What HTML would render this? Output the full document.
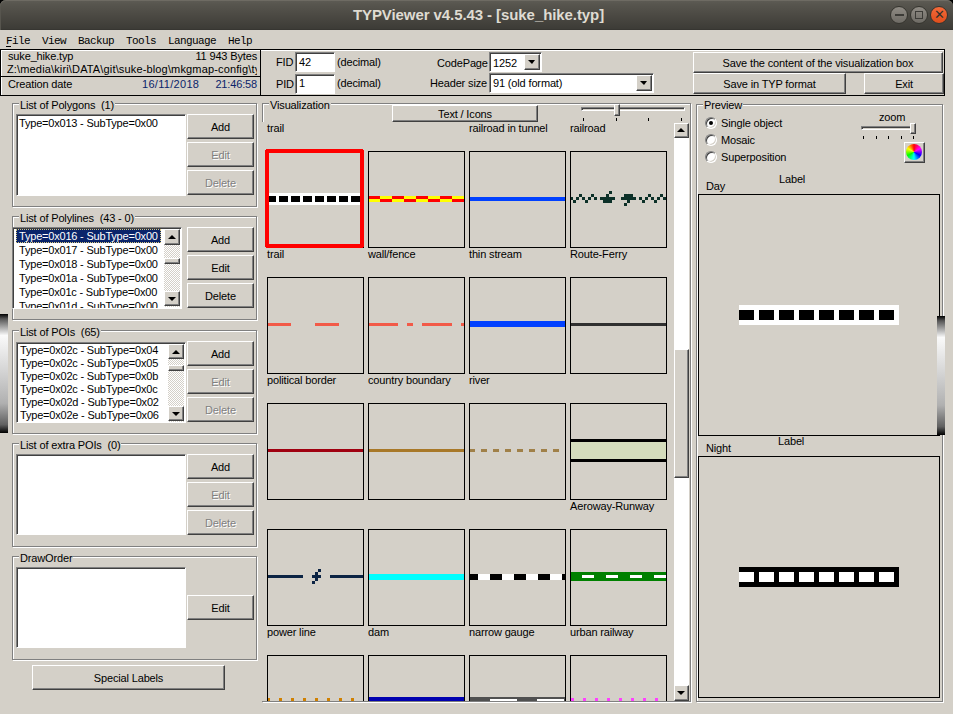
<!DOCTYPE html>
<html><head><meta charset="utf-8">
<style>
*{box-sizing:border-box;margin:0;padding:0}
html,body{width:953px;height:714px;overflow:hidden;background:#d4d0c8;font-family:"Liberation Sans",sans-serif;font-size:11px;color:#000;letter-spacing:-0.15px}
.a{position:absolute}
.t{position:absolute;white-space:nowrap;line-height:12px}
/* title */
#title{left:0;top:0;width:953px;height:30px;background:linear-gradient(#5e5c55,#57554e 15%,#4a4842 55%,#3d3c37 95%,#34332f);border-radius:6px 6px 0 0;box-shadow:inset 0 1px 0 #6e6b63,inset 1px 0 0 #57554e}
#tbg{left:0;top:0;width:953px;height:10px;background:#000}
/* raised button */
.btn{position:absolute;background:#d4d0c8;border-top:1px solid #fff;border-left:1px solid #fff;border-right:1px solid #404040;border-bottom:1px solid #404040;box-shadow:inset -1px -1px 0 #808080;text-align:center;white-space:nowrap}
.dis{color:#808080;text-shadow:1px 1px 0 #fff}
/* sunken */
.sunk{position:absolute;background:#fff;border-top:1px solid #808080;border-left:1px solid #808080;border-right:1px solid #fff;border-bottom:1px solid #fff;box-shadow:inset 1px 1px 0 #404040}
/* group box */
.grp{position:absolute;border:1px solid #808080;box-shadow:1px 1px 0 #fff, inset 1px 1px 0 #fff}
.gl{position:absolute;background:#d4d0c8;padding:0 1px;white-space:nowrap;line-height:12px}
.vb{position:absolute;border:1px solid #000;overflow:hidden}
.lab{position:absolute;white-space:nowrap;line-height:12px}
.li{position:absolute;white-space:nowrap;line-height:14px;height:14px;letter-spacing:-0.2px}
.sbt{position:absolute;background:repeating-conic-gradient(#fff 0 25%,#d4d0c8 0 50%) 0 0/2px 2px}
.tri{position:absolute;width:0;height:0;border-left:4px solid transparent;border-right:4px solid transparent}
.tu{border-bottom:4px solid #000}
.td{border-top:4px solid #000}
.rad{position:absolute;width:12px;height:12px;border-radius:50%;background:#fff;border:1px solid;border-color:#808080 #fff #fff #808080;box-shadow:inset 1px 1px 0 #404040,inset -1px -1px 0 #d4d0c8}
</style></head><body>
<div class="a" id="tbg"></div>
<div class="a" id="title"></div>
<div class="t" style="left:2px;top:6px;width:953px;text-align:center;font-size:15px;line-height:18px;font-weight:bold;color:#dfdbd2;letter-spacing:-0.08px">TYPViewer v4.5.43 - [suke_hike.typ]</div>

<!-- window buttons -->
<div class="a" style="left:890px;top:6px;width:18px;height:18px;border-radius:50%;background:linear-gradient(#8f8b84,#6e6b65);border:1px solid #36352f"></div>
<div class="a" style="left:895px;top:14px;width:9px;height:2px;background:#3c3b37"></div>
<div class="a" style="left:910px;top:6px;width:18px;height:18px;border-radius:50%;background:linear-gradient(#8f8b84,#6e6b65);border:1px solid #36352f"></div>
<div class="a" style="left:915px;top:11px;width:8px;height:8px;border:1.5px solid #3c3b37"></div>
<div class="a" style="left:930px;top:6px;width:18px;height:18px;border-radius:50%;background:linear-gradient(#f46a3a,#df4e1c);border:1px solid #36352f"></div>
<div class="t" style="left:930px;top:6px;width:18px;height:18px;text-align:center;line-height:18px;font-size:13px;color:#30302a">&#x2715;</div>

<!-- menu -->
<div class="t" style="left:6px;top:34px;font-family:'Liberation Mono',monospace;font-size:11px;letter-spacing:-0.6px;line-height:14px;white-space:pre">File  View  Backup  Tools  Language  Help</div>
<div class="a" style="left:6px;top:46px;width:5px;height:1px;background:#000"></div>

<!-- header frame -->
<div class="a" style="left:0;top:49px;width:945px;height:47px;border:1px solid #000;box-shadow:inset 1px 1px 0 #fff"></div>
<div class="a" style="left:260px;top:49px;width:1px;height:47px;background:#000"></div>
<div class="a" style="left:0;top:76px;width:261px;height:1px;background:#000"></div>
<div class="t" style="left:8px;top:50px">suke_hike.typ</div>
<div class="t" style="left:194px;top:50px;width:63px;text-align:right">11 943 Bytes</div>
<div class="a" style="left:7px;top:62px;width:250px;height:13px;overflow:hidden"><div class="t" style="left:0;top:1px;letter-spacing:0.15px">Z:\media\kiri\DATA\git\suke-blog\mkgmap-config\typ</div></div>
<div class="t" style="left:8px;top:78px">Creation date</div>
<div class="t" style="left:142px;top:78px;color:#0a246a;letter-spacing:0.3px">16/11/2018</div>
<div class="t" style="left:200px;top:78px;width:57px;text-align:right;color:#0a246a">21:46:58</div>

<div class="t" style="left:276px;top:56px">FID</div>
<div class="sunk" style="left:295px;top:52px;width:40px;height:20px"></div>
<div class="t" style="left:299px;top:56px">42</div>
<div class="t" style="left:337px;top:56px">(decimal)</div>
<div class="t" style="left:276px;top:78px">PID</div>
<div class="sunk" style="left:295px;top:74px;width:40px;height:20px"></div>
<div class="t" style="left:299px;top:77px">1</div>
<div class="t" style="left:337px;top:77px">(decimal)</div>

<div class="t" style="left:437px;top:57px">CodePage</div>
<div class="sunk" style="left:489px;top:52px;width:53px;height:20px"></div>
<div class="t" style="left:493px;top:57px">1252</div>
<div class="btn" style="left:524px;top:54px;width:16px;height:16px"><div class="tri td" style="left:3px;top:5px;border-left-width:4px;border-right-width:3px"></div></div>
<div class="t" style="left:428px;top:77px;width:59px;text-align:right">Header size</div>
<div class="sunk" style="left:489px;top:73px;width:165px;height:20px"></div>
<div class="t" style="left:493px;top:77px">91 (old format)</div>
<div class="btn" style="left:636px;top:75px;width:16px;height:16px"><div class="tri td" style="left:3px;top:5px;border-left-width:4px;border-right-width:3px"></div></div>

<div class="btn" style="left:693px;top:52px;width:250px;height:21px;line-height:20px">Save the content of the visualization box</div>
<div class="btn" style="left:693px;top:73px;width:153px;height:21px;line-height:20px">Save in TYP format</div>
<div class="btn" style="left:864px;top:73px;width:80px;height:21px;line-height:20px">Exit</div>

<!-- LEFT PANEL -->
<!-- polygons -->
<div class="grp" style="left:12px;top:103px;width:245px;height:104px"></div>
<div class="gl" style="left:19px;top:99px">List of Polygons&nbsp; (1)</div>
<div class="sunk" style="left:16px;top:114px;width:170px;height:82px"></div>
<div class="t" style="left:19px;top:117px;letter-spacing:-0.2px">Type=0x013 - SubType=0x00</div>
<div class="btn" style="left:187px;top:114px;width:67px;height:25px;line-height:25px">Add</div>
<div class="btn dis" style="left:187px;top:142px;width:67px;height:25px;line-height:25px">Edit</div>
<div class="btn dis" style="left:187px;top:170px;width:67px;height:25px;line-height:25px">Delete</div>

<!-- polylines -->
<div class="grp" style="left:12px;top:216px;width:245px;height:104px"></div>
<div class="gl" style="left:19px;top:212px">List of Polylines&nbsp; (43 - 0)</div>
<div class="sunk" style="left:12px;top:227px;width:170px;height:82px;overflow:hidden">
  <div class="a" style="left:3px;top:1px;width:145px;height:14px;background:#0a246a;outline:1px dotted #d8c880;outline-offset:-1px"></div>
  <div class="li" style="left:6px;top:1px;color:#fff">Type=0x016 - SubType=0x00</div>
  <div class="li" style="left:6px;top:15px">Type=0x017 - SubType=0x00</div>
  <div class="li" style="left:6px;top:29px">Type=0x018 - SubType=0x00</div>
  <div class="li" style="left:6px;top:43px">Type=0x01a - SubType=0x00</div>
  <div class="li" style="left:6px;top:57px">Type=0x01c - SubType=0x00</div>
  <div class="li" style="left:6px;top:71px">Type=0x01d - SubType=0x00</div>
  <div class="sbt" style="left:151px;top:1px;width:16px;height:78px"></div>
  <div class="btn" style="left:151px;top:1px;width:16px;height:16px"><div class="tri tu" style="left:3px;top:5px"></div></div>
  <div class="btn" style="left:151px;top:30px;width:16px;height:6px"></div>
  <div class="btn" style="left:151px;top:63px;width:16px;height:15px"><div class="tri td" style="left:3px;top:5px"></div></div>
</div>
<div class="btn" style="left:187px;top:227px;width:67px;height:25px;line-height:25px">Add</div>
<div class="btn" style="left:187px;top:255px;width:67px;height:25px;line-height:25px">Edit</div>
<div class="btn" style="left:187px;top:283px;width:67px;height:25px;line-height:25px">Delete</div>

<!-- POIs -->
<div class="grp" style="left:12px;top:330px;width:245px;height:104px"></div>
<div class="gl" style="left:19px;top:326px">List of POIs&nbsp; (65)</div>
<div class="sunk" style="left:16px;top:342px;width:170px;height:81px;overflow:hidden">
  <div class="li" style="left:3px;top:1px;line-height:13px">Type=0x02c - SubType=0x04</div>
  <div class="li" style="left:3px;top:14px;line-height:13px">Type=0x02c - SubType=0x05</div>
  <div class="li" style="left:3px;top:27px;line-height:13px">Type=0x02c - SubType=0x0b</div>
  <div class="li" style="left:3px;top:40px;line-height:13px">Type=0x02c - SubType=0x0c</div>
  <div class="li" style="left:3px;top:53px;line-height:13px">Type=0x02d - SubType=0x02</div>
  <div class="li" style="left:3px;top:66px;line-height:13px">Type=0x02e - SubType=0x06</div>
  <div class="sbt" style="left:151px;top:1px;width:16px;height:78px"></div>
  <div class="btn" style="left:151px;top:1px;width:16px;height:15px"><div class="tri tu" style="left:3px;top:5px"></div></div>
  <div class="btn" style="left:151px;top:22px;width:16px;height:6px"></div>
  <div class="btn" style="left:151px;top:63px;width:16px;height:15px"><div class="tri td" style="left:3px;top:5px"></div></div>
</div>
<div class="btn" style="left:187px;top:341px;width:67px;height:25px;line-height:25px">Add</div>
<div class="btn dis" style="left:187px;top:369px;width:67px;height:25px;line-height:25px">Edit</div>
<div class="btn dis" style="left:187px;top:397px;width:67px;height:25px;line-height:25px">Delete</div>

<!-- extra POIs -->
<div class="grp" style="left:12px;top:443px;width:245px;height:104px"></div>
<div class="gl" style="left:19px;top:439px">List of extra POIs&nbsp; (0)</div>
<div class="sunk" style="left:16px;top:454px;width:170px;height:81px"></div>
<div class="btn" style="left:187px;top:454px;width:67px;height:25px;line-height:25px">Add</div>
<div class="btn dis" style="left:187px;top:482px;width:67px;height:25px;line-height:25px">Edit</div>
<div class="btn dis" style="left:187px;top:510px;width:67px;height:25px;line-height:25px">Delete</div>

<!-- DrawOrder -->
<div class="grp" style="left:12px;top:556px;width:245px;height:104px"></div>
<div class="gl" style="left:19px;top:552px">DrawOrder</div>
<div class="sunk" style="left:16px;top:567px;width:170px;height:81px"></div>
<div class="btn" style="left:187px;top:595px;width:67px;height:25px;line-height:25px">Edit</div>

<div class="btn" style="left:32px;top:665px;width:193px;height:25px;line-height:25px">Special Labels</div>

<!-- left splitter handle -->
<div class="a" style="left:0;top:314px;width:8px;height:119px;background:linear-gradient(#000 0%,#555 4%,#fafafa 18%,#d8d8d8 45%,#b0b0b0 75%,#606060 93%,#000 100%)"></div>

<!-- VISUALIZATION -->
<div class="grp" style="left:262px;top:103px;width:429px;height:599px"></div>
<div class="gl" style="left:269px;top:99px">Visualization</div>
<div class="btn" style="left:392px;top:105px;width:146px;height:17px;line-height:17px">Text / Icons</div>
<!-- slider -->
<div class="a" style="left:581px;top:107px;width:104px;height:4px;border-top:1px solid #808080;border-left:1px solid #808080;border-bottom:1px solid #fff;border-right:1px solid #fff;box-shadow:inset 1px 1px 0 #404040"></div>
<div class="btn" style="left:614px;top:104px;width:6px;height:12px"></div>
<div class="a" style="left:583px;top:118px;width:1px;height:3px;background:#000"></div>
<div class="a" style="left:616px;top:118px;width:1px;height:3px;background:#000"></div>
<div class="a" style="left:648px;top:118px;width:1px;height:3px;background:#000"></div>
<div class="a" style="left:681px;top:118px;width:1px;height:3px;background:#000"></div>
<!-- canvas -->
<div class="a" style="left:262px;top:122px;width:412px;height:579px;background:#d4d0c8"></div>
<svg class="a" style="left:0;top:0" width="953" height="714" viewBox="0 0 953 714" shape-rendering="crispEdges"><defs><clipPath id="c00"><rect x="268" y="152" width="95" height="95"/></clipPath><clipPath id="c01"><rect x="369" y="152" width="95" height="95"/></clipPath><clipPath id="c02"><rect x="470" y="152" width="95" height="95"/></clipPath><clipPath id="c03"><rect x="571" y="152" width="95" height="95"/></clipPath><clipPath id="c10"><rect x="268" y="278" width="95" height="95"/></clipPath><clipPath id="c11"><rect x="369" y="278" width="95" height="95"/></clipPath><clipPath id="c12"><rect x="470" y="278" width="95" height="95"/></clipPath><clipPath id="c13"><rect x="571" y="278" width="95" height="95"/></clipPath><clipPath id="c20"><rect x="268" y="404" width="95" height="95"/></clipPath><clipPath id="c21"><rect x="369" y="404" width="95" height="95"/></clipPath><clipPath id="c22"><rect x="470" y="404" width="95" height="95"/></clipPath><clipPath id="c23"><rect x="571" y="404" width="95" height="95"/></clipPath><clipPath id="c30"><rect x="268" y="530" width="95" height="95"/></clipPath><clipPath id="c31"><rect x="369" y="530" width="95" height="95"/></clipPath><clipPath id="c32"><rect x="470" y="530" width="95" height="95"/></clipPath><clipPath id="c33"><rect x="571" y="530" width="95" height="95"/></clipPath><clipPath id="c40"><rect x="268" y="656" width="95" height="95"/></clipPath><clipPath id="c41"><rect x="369" y="656" width="95" height="95"/></clipPath><clipPath id="c42"><rect x="470" y="656" width="95" height="95"/></clipPath><clipPath id="c43"><rect x="571" y="656" width="95" height="95"/></clipPath><clipPath id="canv"><rect x="262" y="122" width="412" height="579"/></clipPath></defs><g clip-path="url(#canv)"><rect x="267.5" y="151.5" width="96" height="96" fill="none" stroke="#000" stroke-width="1"/><rect x="368.5" y="151.5" width="96" height="96" fill="none" stroke="#000" stroke-width="1"/><rect x="469.5" y="151.5" width="96" height="96" fill="none" stroke="#000" stroke-width="1"/><rect x="570.5" y="151.5" width="96" height="96" fill="none" stroke="#000" stroke-width="1"/><rect x="267.5" y="277.5" width="96" height="96" fill="none" stroke="#000" stroke-width="1"/><rect x="368.5" y="277.5" width="96" height="96" fill="none" stroke="#000" stroke-width="1"/><rect x="469.5" y="277.5" width="96" height="96" fill="none" stroke="#000" stroke-width="1"/><rect x="570.5" y="277.5" width="96" height="96" fill="none" stroke="#000" stroke-width="1"/><rect x="267.5" y="403.5" width="96" height="96" fill="none" stroke="#000" stroke-width="1"/><rect x="368.5" y="403.5" width="96" height="96" fill="none" stroke="#000" stroke-width="1"/><rect x="469.5" y="403.5" width="96" height="96" fill="none" stroke="#000" stroke-width="1"/><rect x="570.5" y="403.5" width="96" height="96" fill="none" stroke="#000" stroke-width="1"/><rect x="267.5" y="529.5" width="96" height="96" fill="none" stroke="#000" stroke-width="1"/><rect x="368.5" y="529.5" width="96" height="96" fill="none" stroke="#000" stroke-width="1"/><rect x="469.5" y="529.5" width="96" height="96" fill="none" stroke="#000" stroke-width="1"/><rect x="570.5" y="529.5" width="96" height="96" fill="none" stroke="#000" stroke-width="1"/><rect x="267.5" y="655.5" width="96" height="96" fill="none" stroke="#000" stroke-width="1"/><rect x="368.5" y="655.5" width="96" height="96" fill="none" stroke="#000" stroke-width="1"/><rect x="469.5" y="655.5" width="96" height="96" fill="none" stroke="#000" stroke-width="1"/><rect x="570.5" y="655.5" width="96" height="96" fill="none" stroke="#000" stroke-width="1"/><g clip-path="url(#c00)"><rect x="267" y="193" width="97" height="12" fill="#fff"/><rect x="267" y="196" width="9" height="6" fill="#000"/><rect x="279" y="196" width="9" height="6" fill="#000"/><rect x="291" y="196" width="9" height="6" fill="#000"/><rect x="303" y="196" width="9" height="6" fill="#000"/><rect x="315" y="196" width="9" height="6" fill="#000"/><rect x="327" y="196" width="9" height="6" fill="#000"/><rect x="339" y="196" width="9" height="6" fill="#000"/><rect x="351" y="196" width="9" height="6" fill="#000"/><rect x="363" y="196" width="9" height="6" fill="#000"/></g><g clip-path="url(#c01)"><rect x="344" y="196" width="12" height="3" fill="#f00"/><rect x="356" y="196" width="12" height="3" fill="#ff0"/><rect x="344" y="199" width="12" height="3" fill="#ff0"/><rect x="356" y="199" width="12" height="3" fill="#f00"/><rect x="368" y="196" width="12" height="3" fill="#f00"/><rect x="380" y="196" width="12" height="3" fill="#ff0"/><rect x="368" y="199" width="12" height="3" fill="#ff0"/><rect x="380" y="199" width="12" height="3" fill="#f00"/><rect x="392" y="196" width="12" height="3" fill="#f00"/><rect x="404" y="196" width="12" height="3" fill="#ff0"/><rect x="392" y="199" width="12" height="3" fill="#ff0"/><rect x="404" y="199" width="12" height="3" fill="#f00"/><rect x="416" y="196" width="12" height="3" fill="#f00"/><rect x="428" y="196" width="12" height="3" fill="#ff0"/><rect x="416" y="199" width="12" height="3" fill="#ff0"/><rect x="428" y="199" width="12" height="3" fill="#f00"/><rect x="440" y="196" width="12" height="3" fill="#f00"/><rect x="452" y="196" width="12" height="3" fill="#ff0"/><rect x="440" y="199" width="12" height="3" fill="#ff0"/><rect x="452" y="199" width="12" height="3" fill="#f00"/><rect x="464" y="196" width="12" height="3" fill="#f00"/><rect x="476" y="196" width="12" height="3" fill="#ff0"/><rect x="464" y="199" width="12" height="3" fill="#ff0"/><rect x="476" y="199" width="12" height="3" fill="#f00"/></g><g clip-path="url(#c02)"><rect x="469" y="197" width="97" height="4" fill="#0040ff"/></g><g clip-path="url(#c03)"><rect x="570" y="197" width="3" height="3" fill="#0c3028"/><rect x="573" y="200" width="3" height="3" fill="#0c3028"/><rect x="576" y="197" width="3" height="3" fill="#0c3028"/><rect x="579" y="194" width="3" height="3" fill="#0c3028"/><rect x="582" y="197" width="3" height="3" fill="#0c3028"/><rect x="585" y="200" width="3" height="3" fill="#0c3028"/><rect x="588" y="197" width="3" height="3" fill="#0c3028"/><rect x="591" y="194" width="3" height="3" fill="#0c3028"/><rect x="594" y="197" width="3" height="3" fill="#0c3028"/><rect x="639" y="197" width="3" height="3" fill="#0c3028"/><rect x="642" y="200" width="3" height="3" fill="#0c3028"/><rect x="645" y="197" width="3" height="3" fill="#0c3028"/><rect x="648" y="194" width="3" height="3" fill="#0c3028"/><rect x="651" y="197" width="3" height="3" fill="#0c3028"/><rect x="654" y="200" width="3" height="3" fill="#0c3028"/><rect x="657" y="197" width="3" height="3" fill="#0c3028"/><rect x="660" y="194" width="3" height="3" fill="#0c3028"/><rect x="663" y="197" width="3" height="3" fill="#0c3028"/><rect x="666" y="200" width="3" height="3" fill="#0c3028"/><rect x="609" y="191" width="3" height="3" fill="#0c3028"/><rect x="606" y="194" width="3" height="3" fill="#0c3028"/><rect x="600" y="197" width="3" height="3" fill="#0c3028"/><rect x="603" y="197" width="3" height="3" fill="#0c3028"/><rect x="606" y="197" width="3" height="3" fill="#0c3028"/><rect x="609" y="197" width="3" height="3" fill="#0c3028"/><rect x="612" y="197" width="3" height="3" fill="#0c3028"/><rect x="603" y="200" width="3" height="3" fill="#0c3028"/><rect x="606" y="200" width="3" height="3" fill="#0c3028"/><rect x="609" y="200" width="3" height="3" fill="#0c3028"/><rect x="624" y="194" width="3" height="3" fill="#0c3028"/><rect x="627" y="194" width="3" height="3" fill="#0c3028"/><rect x="630" y="194" width="3" height="3" fill="#0c3028"/><rect x="621" y="197" width="3" height="3" fill="#0c3028"/><rect x="624" y="197" width="3" height="3" fill="#0c3028"/><rect x="627" y="197" width="3" height="3" fill="#0c3028"/><rect x="630" y="197" width="3" height="3" fill="#0c3028"/><rect x="633" y="197" width="3" height="3" fill="#0c3028"/><rect x="627" y="200" width="3" height="3" fill="#0c3028"/><rect x="624" y="203" width="3" height="3" fill="#0c3028"/></g><g clip-path="url(#c10)"><rect x="267" y="323" width="24" height="3" fill="#f25a48"/><rect x="315" y="323" width="24" height="3" fill="#f25a48"/></g><g clip-path="url(#c11)"><rect x="368" y="323" width="30" height="3" fill="#f25a48"/><rect x="407" y="323" width="6" height="3" fill="#f25a48"/><rect x="422" y="323" width="30" height="3" fill="#f25a48"/><rect x="461" y="323" width="6" height="3" fill="#f25a48"/><rect x="476" y="323" width="30" height="3" fill="#f25a48"/><rect x="515" y="323" width="6" height="3" fill="#f25a48"/></g><g clip-path="url(#c12)"><rect x="469" y="321" width="97" height="6" fill="#0040ff"/></g><g clip-path="url(#c13)"><rect x="570" y="323" width="97" height="3" fill="#303030"/></g><g clip-path="url(#c20)"><rect x="267" y="449" width="97" height="3" fill="#a00010"/></g><g clip-path="url(#c21)"><rect x="368" y="449" width="97" height="3" fill="#a87828"/></g><g clip-path="url(#c22)"><rect x="469" y="449" width="6" height="3" fill="#a08048"/><rect x="481" y="449" width="6" height="3" fill="#a08048"/><rect x="493" y="449" width="6" height="3" fill="#a08048"/><rect x="505" y="449" width="6" height="3" fill="#a08048"/><rect x="517" y="449" width="6" height="3" fill="#a08048"/><rect x="529" y="449" width="6" height="3" fill="#a08048"/><rect x="541" y="449" width="6" height="3" fill="#a08048"/><rect x="553" y="449" width="6" height="3" fill="#a08048"/><rect x="565" y="449" width="6" height="3" fill="#a08048"/></g><g clip-path="url(#c23)"><rect x="570" y="439" width="97" height="3" fill="#000"/><rect x="570" y="442" width="97" height="17" fill="#d4dcbc"/><rect x="570" y="459" width="97" height="3" fill="#000"/></g><g clip-path="url(#c30)"><rect x="267" y="575" width="36" height="3" fill="#0c2444"/><rect x="330" y="575" width="40" height="3" fill="#0c2444"/><rect x="318" y="569" width="3" height="3" fill="#0c2444"/><rect x="315" y="572" width="3" height="3" fill="#0c2444"/><rect x="312" y="575" width="9" height="3" fill="#0c2444"/><rect x="315" y="578" width="3" height="3" fill="#0c2444"/><rect x="312" y="581" width="3" height="3" fill="#0c2444"/></g><g clip-path="url(#c31)"><rect x="368" y="574" width="97" height="6" fill="#00ffff"/></g><g clip-path="url(#c32)"><rect x="442" y="574" width="12" height="6" fill="#000"/><rect x="454" y="574" width="12" height="6" fill="#fff"/><rect x="466" y="574" width="12" height="6" fill="#000"/><rect x="478" y="574" width="12" height="6" fill="#fff"/><rect x="490" y="574" width="12" height="6" fill="#000"/><rect x="502" y="574" width="12" height="6" fill="#fff"/><rect x="514" y="574" width="12" height="6" fill="#000"/><rect x="526" y="574" width="12" height="6" fill="#fff"/><rect x="538" y="574" width="12" height="6" fill="#000"/><rect x="550" y="574" width="12" height="6" fill="#fff"/><rect x="562" y="574" width="12" height="6" fill="#000"/><rect x="574" y="574" width="12" height="6" fill="#fff"/></g><g clip-path="url(#c33)"><rect x="570" y="572" width="97" height="9" fill="#008000"/><rect x="582" y="575" width="12" height="3" fill="#fff"/><rect x="606" y="575" width="12" height="3" fill="#fff"/><rect x="630" y="575" width="12" height="3" fill="#fff"/><rect x="654" y="575" width="12" height="3" fill="#fff"/><rect x="678" y="575" width="12" height="3" fill="#fff"/></g><g clip-path="url(#c40)"><rect x="267" y="698" width="3" height="3" fill="#d08000"/><rect x="279" y="698" width="3" height="3" fill="#d08000"/><rect x="291" y="698" width="3" height="3" fill="#d08000"/><rect x="303" y="698" width="3" height="3" fill="#d08000"/><rect x="315" y="698" width="3" height="3" fill="#d08000"/><rect x="327" y="698" width="3" height="3" fill="#d08000"/><rect x="339" y="698" width="3" height="3" fill="#d08000"/><rect x="351" y="698" width="3" height="3" fill="#d08000"/><rect x="363" y="698" width="3" height="3" fill="#d08000"/></g><g clip-path="url(#c41)"><rect x="368" y="697" width="97" height="4" fill="#0000b0"/></g><g clip-path="url(#c42)"><rect x="469" y="697" width="97" height="4" fill="#505050"/><rect x="490" y="699" width="27" height="2" fill="#fff"/><rect x="537" y="699" width="27" height="2" fill="#fff"/></g><g clip-path="url(#c43)"><rect x="571" y="698" width="3" height="3" fill="#ff40ff"/><rect x="583" y="698" width="3" height="3" fill="#ff40ff"/><rect x="595" y="698" width="3" height="3" fill="#ff40ff"/><rect x="607" y="698" width="3" height="3" fill="#ff40ff"/><rect x="619" y="698" width="3" height="3" fill="#ff40ff"/><rect x="631" y="698" width="3" height="3" fill="#ff40ff"/><rect x="643" y="698" width="3" height="3" fill="#ff40ff"/><rect x="655" y="698" width="3" height="3" fill="#ff40ff"/><rect x="667" y="698" width="3" height="3" fill="#ff40ff"/></g><rect x="267" y="151" width="95" height="95" fill="none" stroke="#f00" stroke-width="4" rx="1"/></g></svg>
<div class="a" style="left:262px;top:122px;width:412px;height:579px;overflow:hidden"><div class="a" style="left:-262px;top:-122px;width:953px;height:714px"><div class="t vl" style="left:267px;top:122px">trail</div><div class="t vl" style="left:469px;top:122px">railroad in tunnel</div><div class="t vl" style="left:570px;top:122px">railroad</div><div class="t vl" style="left:267px;top:248px">trail</div><div class="t vl" style="left:368px;top:248px">wall/fence</div><div class="t vl" style="left:469px;top:248px">thin stream</div><div class="t vl" style="left:570px;top:248px">Route-Ferry</div><div class="t vl" style="left:267px;top:374px">political border</div><div class="t vl" style="left:368px;top:374px">country boundary</div><div class="t vl" style="left:469px;top:374px">river</div><div class="t vl" style="left:570px;top:500px">Aeroway-Runway</div><div class="t vl" style="left:267px;top:626px">power line</div><div class="t vl" style="left:368px;top:626px">dam</div><div class="t vl" style="left:469px;top:626px">narrow gauge</div><div class="t vl" style="left:570px;top:626px">urban railway</div></div></div>
<!-- v scrollbar -->
<div class="a" style="left:674px;top:123px;width:15px;height:578px;background:#fff"></div>
<div class="btn" style="left:674px;top:123px;width:15px;height:15px"><div class="tri tu" style="left:2px;top:4px"></div></div>
<div class="btn" style="left:674px;top:349px;width:15px;height:129px"></div>
<div class="btn" style="left:674px;top:685px;width:15px;height:16px"><div class="tri td" style="left:2px;top:5px"></div></div>

<!-- PREVIEW -->
<div class="grp" style="left:696px;top:104px;width:247px;height:598px"></div>
<div class="gl" style="left:703px;top:99px">Preview</div>
<div class="rad" style="left:705px;top:117px"><div class="a" style="left:3px;top:3px;width:4px;height:4px;border-radius:50%;background:#000"></div></div>
<div class="t" style="left:721px;top:117px">Single object</div>
<div class="rad" style="left:705px;top:134px"></div>
<div class="t" style="left:721px;top:134px">Mosaic</div>
<div class="rad" style="left:705px;top:151px"></div>
<div class="t" style="left:721px;top:151px">Superposition</div>
<div class="t" style="left:879px;top:111px">zoom</div>
<div class="a" style="left:861px;top:126px;width:55px;height:4px;border-top:1px solid #808080;border-left:1px solid #808080;border-bottom:1px solid #fff;border-right:1px solid #fff;box-shadow:inset 1px 1px 0 #404040"></div>
<div class="btn" style="left:910px;top:123px;width:6px;height:11px"></div>
<div class="a" style="left:863px;top:136px;width:1px;height:3px;background:#000"></div>
<div class="a" style="left:876px;top:136px;width:1px;height:3px;background:#000"></div>
<div class="a" style="left:888px;top:136px;width:1px;height:3px;background:#000"></div>
<div class="a" style="left:901px;top:136px;width:1px;height:3px;background:#000"></div>
<div class="a" style="left:913px;top:136px;width:1px;height:3px;background:#000"></div>
<div class="btn" style="left:904px;top:142px;width:21px;height:21px"></div>
<div class="a" style="left:906px;top:144px;width:16px;height:16px;border-radius:50%;background:conic-gradient(#f00,#f0f,#00f,#0ff,#0f0,#ff0,#f00)"></div>
<div class="t" style="left:779px;top:173px">Label</div>
<div class="t" style="left:706px;top:180px">Day</div>
<div class="a" style="left:698px;top:194px;width:242px;height:242px;border:1px solid #000"></div>
<div class="a" style="left:739px;top:305px;width:160px;height:20px;background:#fff"></div>
<div class="a" style="left:739px;top:310px;width:15px;height:10px;background:#000"></div><div class="a" style="left:759px;top:310px;width:15px;height:10px;background:#000"></div><div class="a" style="left:779px;top:310px;width:15px;height:10px;background:#000"></div><div class="a" style="left:799px;top:310px;width:15px;height:10px;background:#000"></div><div class="a" style="left:819px;top:310px;width:15px;height:10px;background:#000"></div><div class="a" style="left:839px;top:310px;width:15px;height:10px;background:#000"></div><div class="a" style="left:859px;top:310px;width:15px;height:10px;background:#000"></div><div class="a" style="left:879px;top:310px;width:15px;height:10px;background:#000"></div>
<div class="a" style="left:937px;top:316px;width:8px;height:119px;background:linear-gradient(#000 0%,#555 4%,#fafafa 18%,#d8d8d8 45%,#b0b0b0 75%,#606060 93%,#000 100%)"></div>
<div class="t" style="left:778px;top:435px">Label</div>
<div class="t" style="left:706px;top:442px">Night</div>
<div class="a" style="left:698px;top:456px;width:242px;height:242px;border:1px solid #000"></div>
<div class="a" style="left:739px;top:567px;width:160px;height:20px;background:#000"></div>
<div class="a" style="left:739px;top:572px;width:15px;height:10px;background:#fff"></div><div class="a" style="left:759px;top:572px;width:15px;height:10px;background:#fff"></div><div class="a" style="left:779px;top:572px;width:15px;height:10px;background:#fff"></div><div class="a" style="left:799px;top:572px;width:15px;height:10px;background:#fff"></div><div class="a" style="left:819px;top:572px;width:15px;height:10px;background:#fff"></div><div class="a" style="left:839px;top:572px;width:15px;height:10px;background:#fff"></div><div class="a" style="left:859px;top:572px;width:15px;height:10px;background:#fff"></div><div class="a" style="left:879px;top:572px;width:15px;height:10px;background:#fff"></div>
</body></html>
